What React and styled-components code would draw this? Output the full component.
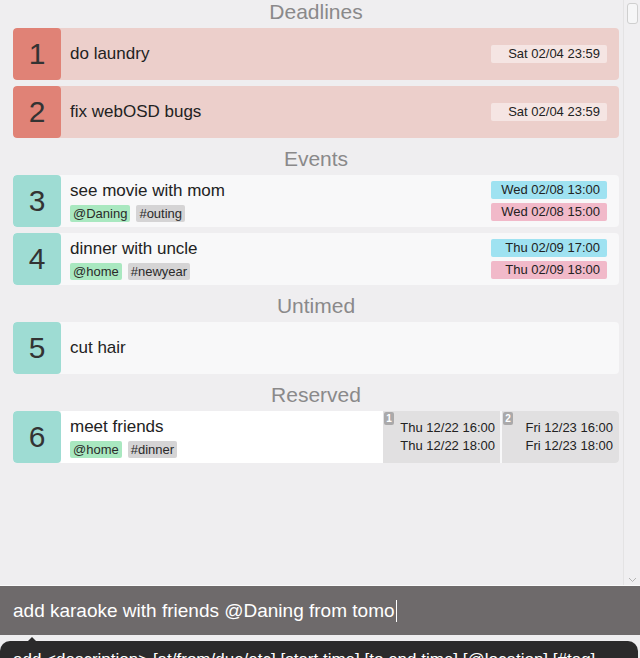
import styled, { createGlobalStyle } from "styled-components";

const GlobalStyle = createGlobalStyle`
    html, body {
        margin: 0;
        padding: 0;
        overflow: hidden;
        background: #efeef0;
        font-family: "Liberation Sans", Arial, sans-serif;
    }
`;

const Page = styled.div`
    display: flex;
    flex-direction: column;
    height: 658px;
    overflow: hidden;
`;

const ListPane = styled.div`
    display: flex;
    flex-direction: row;
    height: 586px;
    flex-shrink: 0;
    border-bottom: 1px solid #fafafa;
    box-sizing: border-box;
`;

const List = styled.div`
    flex: 1;
    padding: 0 4px 0 13px;
`;

const Section = styled.section`
    display: flex;
    flex-direction: column;
    gap: 6px;
    & + & {
        margin-top: 9px;
    }
`;

const Heading = styled.h2`
    margin: 0 0 -6px;
    height: 28px;
    line-height: 24px;
    text-align: center;
    font-size: 21px;
    font-weight: normal;
    color: #8a898a;
`;

const Card = styled.div`
    display: flex;
    flex-direction: row;
    height: 52px;
    border-radius: 4px;
    overflow: hidden;
    background: ${({ kind }) => (kind === "deadline" ? "#eccfcb" : "#f8f8f9")};
`;

const Num = styled.div`
    width: 48px;
    flex-shrink: 0;
    display: flex;
    align-items: center;
    justify-content: center;
    border-radius: 4px;
    font-size: 30px;
    color: #333;
    background: ${({ kind }) => (kind === "deadline" ? "#e08276" : "#9edcd3")};
`;

const Body = styled.div`
    flex: 1;
    display: flex;
    flex-direction: row;
    justify-content: space-between;
    align-items: ${({ centered }) => (centered ? "center" : "flex-start")};
    padding: ${({ centered }) => (centered ? "0 12px 0 9px" : "6px 12px 0 9px")};
    background: ${({ plain }) => (plain ? "#fff" : "transparent")};
`;

const Info = styled.div`
    display: flex;
    flex-direction: column;
    gap: 4px;
`;

const Title = styled.div`
    font-size: 17px;
    line-height: 20px;
    color: #222;
`;

const Tags = styled.div`
    display: flex;
    gap: 6px;
`;

const Tag = styled.span`
    height: 17px;
    line-height: 17px;
    padding: 0 3px;
    border-radius: 2px;
    font-size: 13px;
    color: #2a2a2a;
    background: ${({ type }) => (type === "loc" ? "#a9e8c0" : "#d5d4d5")};
`;

const Dates = styled.div`
    display: flex;
    flex-direction: column;
    gap: 4px;
`;

const DateBadge = styled.div`
    width: 116px;
    height: 18px;
    line-height: 18px;
    box-sizing: border-box;
    padding-right: 7px;
    text-align: right;
    border-radius: 2px;
    font-size: 13px;
    color: #222;
    background: ${({ tone }) =>
        tone === "start" ? "#9fe2f1" : tone === "end" ? "#f1b9c9" : "#f5e5e3"};
`;

const Slots = styled.div`
    display: flex;
    gap: 2px;
`;

const Slot = styled.div`
    position: relative;
    width: 117px;
    display: flex;
    flex-direction: column;
    justify-content: center;
    align-items: flex-end;
    padding-right: ${({ last }) => (last ? "6px" : "5px")};
    box-sizing: border-box;
    background: #e1e0e1;
    font-size: 13px;
    line-height: 18px;
    color: #222;
`;

const SlotIndex = styled.span`
    position: absolute;
    top: 1px;
    left: 1px;
    width: 10px;
    height: 13px;
    line-height: 13px;
    border-radius: 2px;
    text-align: center;
    font-size: 10px;
    font-weight: bold;
    color: #fff;
    background: #aaa9aa;
`;

const ScrollTrack = styled.div`
    width: 17px;
    flex-shrink: 0;
    display: flex;
    flex-direction: column;
    justify-content: space-between;
    align-items: center;
    padding: 3px 0 2px;
    box-sizing: border-box;
    border-left: 1px solid #e4e3e4;
    background: #f0eff1;
`;

const Thumb = styled.div`
    width: 9px;
    height: 19px;
    border: 1px solid #cfcfcf;
    border-radius: 3px;
    background: #f6f6f7;
`;

const CommandBar = styled.div`
    height: 49px;
    flex-shrink: 0;
    display: flex;
    align-items: center;
    padding: 0 13px;
    background: #6e6a6b;
    font-size: 19px;
    color: #fff;
`;

const Caret = styled.span`
    display: inline-block;
    width: 1px;
    height: 22px;
    margin-left: 1px;
    vertical-align: middle;
    background: #fff;
`;

const Hint = styled.div`
    position: relative;
    margin: 6px 2px 0 0;
    padding: 9px 13px;
    border-radius: 10px 10px 0 0;
    background: #2b2a2b;
    color: #fff;
    font-size: 17px;
    white-space: nowrap;

    &::before {
        content: "";
        position: absolute;
        top: -4px;
        left: 27px;
        border-left: 5px solid transparent;
        border-right: 5px solid transparent;
        border-bottom: 5px solid #2b2a2b;
    }
`;

const sections = [
    {
        name: "Deadlines",
        items: [
            { n: 1, kind: "deadline", title: "do laundry", due: "Sat 02/04 23:59" },
            { n: 2, kind: "deadline", title: "fix webOSD bugs", due: "Sat 02/04 23:59" },
        ],
    },
    {
        name: "Events",
        items: [
            {
                n: 3, kind: "event", title: "see movie with mom",
                loc: "@Daning", tag: "#outing",
                start: "Wed 02/08 13:00", end: "Wed 02/08 15:00",
            },
            {
                n: 4, kind: "event", title: "dinner with uncle",
                loc: "@home", tag: "#newyear",
                start: "Thu 02/09 17:00", end: "Thu 02/09 18:00",
            },
        ],
    },
    {
        name: "Untimed",
        items: [{ n: 5, kind: "untimed", title: "cut hair" }],
    },
    {
        name: "Reserved",
        items: [
            {
                n: 6, kind: "reserved", title: "meet friends",
                loc: "@home", tag: "#dinner",
                slots: [
                    ["Thu 12/22 16:00", "Thu 12/22 18:00"],
                    ["Fri 12/23 16:00", "Fri 12/23 18:00"],
                ],
            },
        ],
    },
];

function TaskInfo({ item }) {
    return (
        <Info>
            <Title>{item.title}</Title>
            {item.loc && (
                <Tags>
                    <Tag type="loc">{item.loc}</Tag>
                    <Tag>{item.tag}</Tag>
                </Tags>
            )}
        </Info>
    );
}

function Task({ item }) {
    if (item.kind === "deadline" || item.kind === "untimed") {
        return (
            <Card kind={item.kind}>
                <Num kind={item.kind}>{item.n}</Num>
                <Body centered>
                    <Title>{item.title}</Title>
                    {item.due && <DateBadge>{item.due}</DateBadge>}
                </Body>
            </Card>
        );
    }

    if (item.kind === "reserved") {
        return (
            <Card kind={item.kind}>
                <Num kind={item.kind}>{item.n}</Num>
                <Body plain>
                    <TaskInfo item={item} />
                </Body>
                <Slots>
                    {item.slots.map((slot, i) => (
                        <Slot key={i} last={i === item.slots.length - 1}>
                            <SlotIndex>{i + 1}</SlotIndex>
                            <div>{slot[0]}</div>
                            <div>{slot[1]}</div>
                        </Slot>
                    ))}
                </Slots>
            </Card>
        );
    }

    return (
        <Card kind={item.kind}>
            <Num kind={item.kind}>{item.n}</Num>
            <Body>
                <TaskInfo item={item} />
                <Dates>
                    <DateBadge tone="start">{item.start}</DateBadge>
                    <DateBadge tone="end">{item.end}</DateBadge>
                </Dates>
            </Body>
        </Card>
    );
}

export default function App() {
    return (
        <Page>
            <GlobalStyle />
            <ListPane>
                <List>
                    {sections.map((section) => (
                        <Section key={section.name}>
                            <Heading>{section.name}</Heading>
                            {section.items.map((item) => (
                                <Task item={item} key={item.n} />
                            ))}
                        </Section>
                    ))}
                </List>
                <ScrollTrack>
                    <Thumb />
                    <svg width="9" height="6" viewBox="0 0 9 6">
                        <path d="M1 1 L4.5 4.5 L8 1" fill="none" stroke="#b5b5b5" strokeWidth="1" />
                    </svg>
                </ScrollTrack>
            </ListPane>
            <CommandBar>
                add karaoke with friends @Daning from tomo
                <Caret />
            </CommandBar>
            <Hint>
                add &lt;description&gt; [at/from/due/etc] [start time] [to end time] [@location] [#tag]
            </Hint>
        </Page>
    );
}
